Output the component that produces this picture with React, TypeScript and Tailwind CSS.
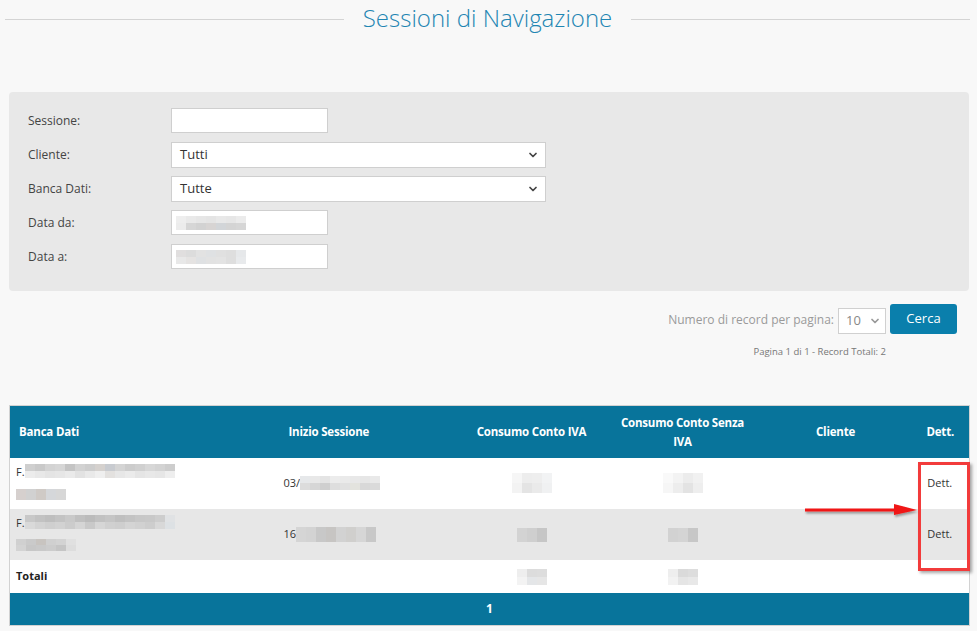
import { ChevronDown } from 'lucide-react';

// pixelated "redacted" blocks, as in the screenshot
function Blur({ cells, h = 'h-[7px]' }: { cells: string[][]; h?: string }) {
  return (
    <span className="inline-flex flex-col align-middle">
      {cells.map((row, i) => (
        <span key={i} className="flex">
          {row.map((c, j) => (
            <span key={j} className={`w-[10px] ${h}`} style={{ backgroundColor: c }} />
          ))}
        </span>
      ))}
    </span>
  );
}

const g1 = ['#cfcfcf', '#c9c9c9', '#d3d3d3', '#d6d6d6', '#c4c4c4', '#d2d2d2', '#cdcdcd', '#d5d1ce', '#c8cbd0', '#d4d4d4', '#cccccc', '#d0d0d0', '#d7d7d7', '#d3d3d3', '#cdcdcd'];
const g2 = ['#ececec', '#e8e8e8', '#e4e4e4', '#e6e6e6', '#eaeaea', '#e2e2e2', '#e9e9e9', '#efefef', '#e3e1df', '#e7e7e7', '#ebebeb', '#e5e5e5', '#e8e8e8', '#e6e6e6', '#eeeeee'];

function FormRow({ label, children }: { label: string; children: React.ReactNode }) {
  return (
    <div className="flex items-center h-[25px]">
      <div className="w-[143px] text-[12px] text-[#444]">{label}</div>
      {children}
    </div>
  );
}

function Select({ value, w }: { value: string; w: string }) {
  return (
    <div className={`${w} h-[26px] bg-white border border-[#cfcfcf] flex items-center justify-between pl-[8px] pr-[6px] text-[13px] text-[#333]`}>
      <span>{value}</span>
      <ChevronDown className="w-[12px] h-[12px] text-[#444]" strokeWidth={3.5} />
    </div>
  );
}

function Input({ children }: { children?: React.ReactNode }) {
  return (
    <div className="w-[157px] h-[25px] bg-white border border-[#cfcfcf] flex items-center pl-[4px]">{children}</div>
  );
}

export default function App() {
  return (
    <div className="relative min-h-[631px] bg-[#f8f8f8] font-['Open_Sans',sans-serif] text-[#333]">
      {/* title */}
      <div className="flex items-center h-[38px] px-[5px] pr-[7px]">
        <div className="flex-1 h-px bg-[#d4d4d4]" />
        <h1 className="px-[19px] text-[24px] font-light text-[#1f86b3] leading-none -mt-[2px]">Sessioni di Navigazione</h1>
        <div className="flex-1 h-px bg-[#d4d4d4]" />
      </div>

      <div className="ml-[9px] w-[960px]">
        {/* filters */}
        <div className="mt-[54px] bg-[#e8e8e8] rounded-[4px] pt-[16px] pb-[22px] pl-[19px] flex flex-col gap-[9px]">
          <FormRow label="Sessione:">
            <Input />
          </FormRow>
          <FormRow label="Cliente:">
            <Select value="Tutti" w="w-[375px]" />
          </FormRow>
          <FormRow label="Banca Dati:">
            <Select value="Tutte" w="w-[375px]" />
          </FormRow>
          <FormRow label="Data da:">
            <Input>
              <Blur cells={[['#eeeeee', '#e9e9e9', '#e6e6e6', '#e4e4e4', '#e8e8e8', '#e6e6e6', '#ebebeb'], ['#ececec', '#d6d6d6', '#d2d2d2', '#d7d4d3', '#d2d5d8', '#d4d4d4', '#d6d6d6']]} />
            </Input>
          </FormRow>
          <FormRow label="Data a:">
            <Input>
              <Blur cells={[['#e0dede', '#dcdcdc', '#e2e2e2', '#dfe1e3', '#e0e0e0', '#dedede', '#e6e8ea'], ['#e8e8e8', '#e5e3e2', '#dfe1e3', '#e2e2e2', '#e3e3e3', '#dedede', '#e8eaec']]} />
            </Input>
          </FormRow>
        </div>

        {/* paging controls */}
        <div className="mt-[13px] flex items-end justify-end pr-[12px]">
          <span className="text-[12px] text-[#9a9a9a] mr-[4px] mb-[5px]">Numero di record per pagina:</span>
          <div className="w-[48px] h-[26px] bg-white border border-[#d0d0d0] flex items-center justify-between pl-[7px] pr-[4px] text-[13px] text-[#888]">
            <span>10</span>
            <ChevronDown className="w-[12px] h-[12px] text-[#999]" strokeWidth={3.5} />
          </div>
          <button className="ml-[4px] w-[67px] h-[30px] bg-[#0a7fac] rounded-[3px] text-white text-[13px]">Cerca</button>
        </div>
        <div className="mt-[12px] flex justify-end pr-[83px] text-[9.5px] text-[#777] leading-[12px]">
          Pagina 1 di 1 - Record Totali: 2
        </div>

        {/* table */}
        <table className="mt-[47px] w-[960px] table-fixed border-collapse border border-[#d2d2d2] text-[11px]">
          <colgroup>
            <col className="w-[269px]" />
            <col className="w-[177px]" />
            <col className="w-[152px]" />
            <col className="w-[150px]" />
            <col className="w-[156px]" />
            <col className="w-[56px]" />
          </colgroup>
          <thead>
            <tr className="h-[52px] bg-[#08749b] text-white text-[11.5px] font-bold tracking-[-0.2px]">
              <th className="text-left pl-[9px]">Banca Dati</th>
              <th className="text-left pl-[10px]">Inizio Sessione</th>
              <th className="text-center">Consumo Conto IVA</th>
              <th className="text-center leading-[19px]">Consumo Conto Senza<br />IVA</th>
              <th className="text-center">Cliente</th>
              <th className="text-center pr-[2px]">Dett.</th>
            </tr>
          </thead>
          <tbody>
            <tr className="h-[51px] bg-white">
              <td className="pl-[6px]">
                <div className="flex items-center gap-0 leading-none">
                  <span className="text-[11px]">F.</span>
                  <Blur cells={[g1, g2]} />
                </div>
                <div className="mt-[7px]">
                  <Blur cells={[['#d6d0ce', '#d1d1d1', '#cfcac6', '#d5d7da', '#d7d7d7']]} h="h-[11px]" />
                </div>
              </td>
              <td className="pl-[5px]">
                <div className="flex items-center">
                  <span>03/</span>
                  <Blur cells={[['#e6e8ea', '#e8e8e8', '#e4e4e4', '#ececec', '#eaeaea', '#e8e8e8', '#e6e6e6', '#e9e9e9'], ['#dcdcdc', '#d6d6d6', '#cfcfcf', '#dedede', '#e1e1e1', '#e3e3de', '#d8d8d8', '#dadada']]} />
                </div>
              </td>
              <td className="text-center">
                <Blur cells={[['#f6f6f6', '#ededed', '#eeeeee', '#f2f3f4'], ['#f3f3f3', '#e4e4e4', '#eaeaea', '#f0f1f2']]} h="h-[10px]" />
              </td>
              <td className="text-center">
                <Blur cells={[['#f9f9f9', '#f3f3f3', '#ececec', '#f1f1f1'], ['#f6f6f6', '#ededed', '#e3e3e3', '#eeeeee']]} h="h-[10px]" />
              </td>
              <td />
              <td className="text-center text-[11px] pr-[3px]">Dett.</td>
            </tr>
            <tr className="h-[51px] bg-[#e7e7e7]">
              <td className="pl-[6px]">
                <div className="flex items-center leading-none">
                  <span className="text-[11px]">F.</span>
                  <Blur cells={[['#c8c8c8', '#c2c2c2', '#bebebe', '#c3c3c3', '#c9c9c9', '#c0c0c0', '#bbbbbb', '#c1c1c1', '#c5c5c5', '#bfbfbf', '#c3c3c3', '#c7c7c7', '#c8c8c8', '#cdcdcd', '#e0e2e4'], ['#d9d9d9', '#d3d3d3', '#cfcfcf', '#d2d2d2', '#cccccc', '#d5d5d5', '#c9c9c9', '#d6d6d6', '#d0d0d0', '#cecece', '#d4d4d4', '#d1d1d1', '#cdcdcd', '#d8d8d8', '#dde1e4']]} />
                </div>
                <div className="mt-[7px]">
                  <Blur cells={[['#d0d0d0', '#cacaca', '#c8c4c0', '#d0d0d0', '#d3d3d3', '#e0e0e0'], ['#d3d3d3', '#c7c7c7', '#c9c9c9', '#cccccc', '#c5c5c5', '#dddddd']]} h="h-[6px]" />
                </div>
              </td>
              <td className="pl-[5px]">
                <div className="flex items-center">
                  <span>16</span>
                  <Blur cells={[['#d5d5d5', '#d3d3d3', '#c8c8c8', '#c7c5c3', '#d2d2d2', '#d0cfcd', '#d6d6d6', '#c8c8c8']]} h="h-[15px]" />
                </div>
              </td>
              <td className="text-center">
                <Blur cells={[['#d3d3d3', '#cfcfcf', '#c6c6c6']]} h="h-[14px]" />
              </td>
              <td className="text-center">
                <Blur cells={[['#d2d2d2', '#d4d4d4', '#c7c7c7']]} h="h-[14px]" />
              </td>
              <td />
              <td className="text-center text-[11px] pr-[3px]">Dett.</td>
            </tr>
            <tr className="h-[33px] bg-white">
              <td className="pl-[6px] font-bold text-[11px] text-[#222]">Totali</td>
              <td />
              <td className="text-center">
                <Blur cells={[['#eeeeee', '#dcdcdc', '#dddddd'], ['#f3f3f3', '#e4e6e8', '#e6e6e6']]} h="h-[8px]" />
              </td>
              <td className="text-center">
                <Blur cells={[['#eeeeee', '#dadada', '#dddddd'], ['#f2f2f2', '#e5e5e5', '#e8e8e8']]} h="h-[8px]" />
              </td>
              <td />
              <td />
            </tr>
          </tbody>
          <tfoot>
            <tr className="h-[33px] bg-[#08749b]">
              <td colSpan={6} className="text-center text-white font-bold text-[12px]">1</td>
            </tr>
          </tfoot>
        </table>
      </div>

      {/* annotation overlay */}
      <div className="absolute left-[918px] top-[462px] w-[52px] h-[109px] border-[3px] border-[#f23b3b] shadow-[2px_2px_3px_rgba(0,0,0,0.35)]" />
      <svg className="absolute left-[800px] top-[500px]" width="120" height="20" viewBox="0 0 120 20">
        <defs>
          <filter id="sh" x="-10%" y="-50%" width="120%" height="200%">
            <feDropShadow dx="1" dy="2" stdDeviation="1" floodColor="#000" floodOpacity="0.35" />
          </filter>
        </defs>
        <g filter="url(#sh)">
          <line x1="5" y1="10" x2="98" y2="10" stroke="#f01414" strokeWidth="3" />
          <polygon points="94,4 117,10 94,15" fill="#f01414" />
        </g>
      </svg>
    </div>
  );
}
